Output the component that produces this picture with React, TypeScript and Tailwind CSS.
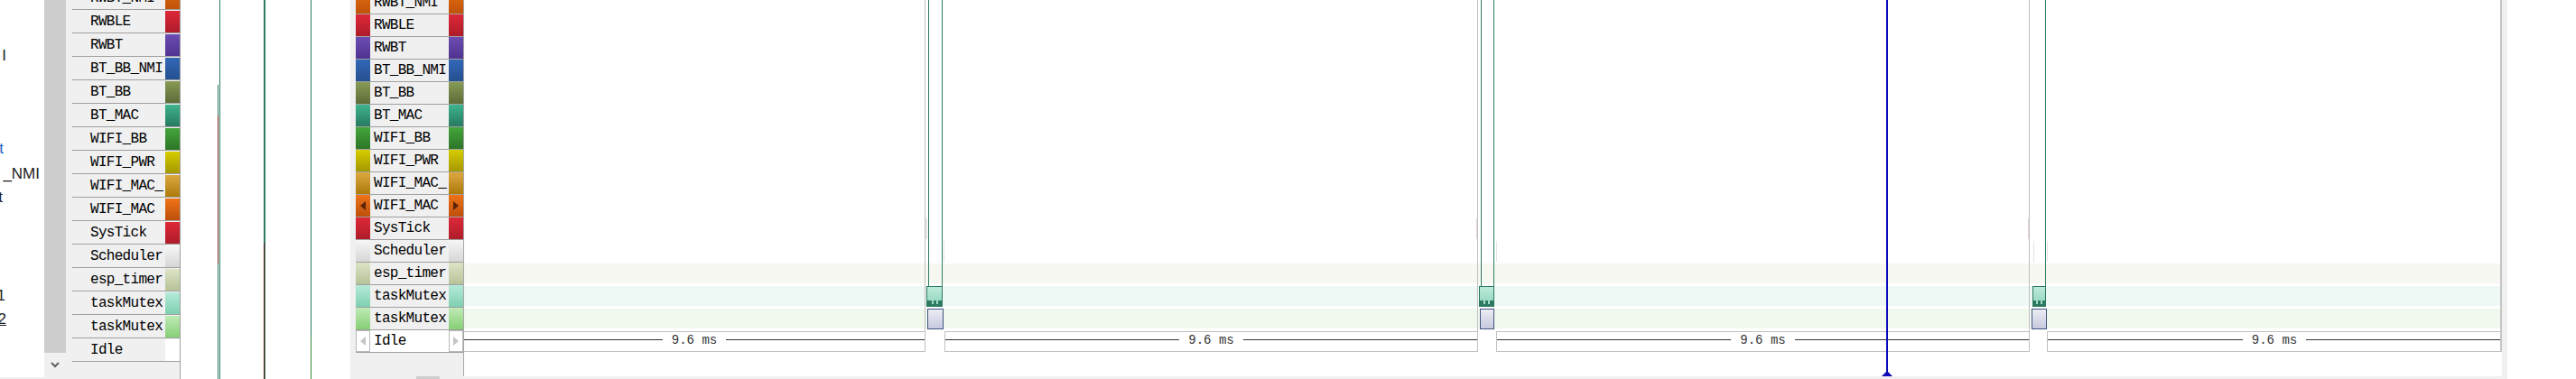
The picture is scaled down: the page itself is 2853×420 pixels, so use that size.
import React from 'react';

interface Track {
  name: string;
  swatch: string;
  mark?: 'dark' | 'idle';
}

const tracks: Track[] = [
  { name: 'RWBT_NMI', swatch: 'bg-linear-to-b from-[#e36c12] to-[#bf5208]' },
  { name: 'RWBLE', swatch: 'bg-linear-to-b from-[#de2838] to-[#ae1c2a]' },
  { name: 'RWBT', swatch: 'bg-linear-to-b from-[#6c4cb4] to-[#4f3390]' },
  { name: 'BT_BB_NMI', swatch: 'bg-linear-to-b from-[#3268b8] to-[#254f90]' },
  { name: 'BT_BB', swatch: 'bg-linear-to-b from-[#879a55] to-[#5e6c38]' },
  { name: 'BT_MAC', swatch: 'bg-linear-to-b from-[#3db48e] to-[#287a62]' },
  { name: 'WIFI_BB', swatch: 'bg-linear-to-b from-[#44a63a] to-[#2c7628]' },
  { name: 'WIFI_PWR', swatch: 'bg-linear-to-b from-[#d6cc00] to-[#a49800]' },
  { name: 'WIFI_MAC_', swatch: 'bg-linear-to-b from-[#dca83e] to-[#ad7a06]' },
  { name: 'WIFI_MAC', swatch: 'bg-linear-to-b from-[#ef7318] to-[#bd4f0a]', mark: 'dark' },
  { name: 'SysTick', swatch: 'bg-linear-to-b from-[#de2838] to-[#ae1c2a]' },
  { name: 'Scheduler', swatch: 'bg-linear-to-b from-[#f6f6f6] to-[#d6d6d6]' },
  { name: 'esp_timer', swatch: 'bg-linear-to-b from-[#dce4c6] to-[#b6c298]' },
  { name: 'taskMutex', swatch: 'bg-linear-to-b from-[#b4ead9] to-[#7ed0b0]' },
  { name: 'taskMutex', swatch: 'bg-linear-to-b from-[#bfeab6] to-[#86cf74]' },
  { name: 'Idle', swatch: 'bg-white', mark: 'idle' },
];

const Arrow = ({ dir, color }: { dir: 'left' | 'right'; color: string }) => (
  <svg width="6" height="10" viewBox="0 0 6 10">
    <path d={dir === 'left' ? 'M6 0 L0 5 L6 10 Z' : 'M0 0 L6 5 L0 10 Z'} fill={color} />
  </svg>
);

// clipped text of the tree view on the far left
const TreePane = () => (
  <div className="h-[418px] w-[49px] shrink-0 overflow-hidden bg-white font-['Liberation_Sans',sans-serif] text-[17px] leading-[20px] text-[#1c1c1c]">
    <div className="mt-[52px] flex h-[20px] w-[7px] justify-end">
      <span className="whitespace-nowrap">Core I</span>
    </div>
    <div className="mt-[83px] flex h-[20px] w-[4px] justify-end text-[#1764c4]">
      <span className="whitespace-nowrap">Wait</span>
    </div>
    <div className="mt-[8px] flex h-[20px] w-[44px] justify-end">
      <span className="whitespace-nowrap">BT_BB _NMI</span>
    </div>
    <div className="mt-[6px] flex h-[20px] w-[3px] justify-end">
      <span className="whitespace-nowrap">Event</span>
    </div>
    <div className="mt-[89px] flex h-[20px] w-[6px] justify-end">
      <span className="whitespace-nowrap">Task1</span>
    </div>
    <div className="mt-[6px] flex h-[20px] w-[7px] justify-end">
      <span className="whitespace-nowrap underline">Task2</span>
    </div>
  </div>
);

const VScroll = () => (
  <div className="flex h-[420px] w-[24px] shrink-0 flex-col">
    <div className="h-[391px] bg-[#cdcdcd]" />
    <div className="flex h-[27px] items-center justify-center">
      <svg width="10" height="7" viewBox="0 0 10 7">
        <polyline points="1,1 5,5 9,1" fill="none" stroke="#606060" strokeWidth="2" />
      </svg>
    </div>
  </div>
);

const LegendNarrow = () => (
  <div className="h-[420px] w-[120px] shrink-0 overflow-hidden border-r border-[#a0a0a0]">
    <div className="-mt-[16px]">
      {tracks.map((t, i) => (
        <div key={i} className="flex h-[26px] border-t border-[#a0a0a0] pt-px">
          <div className="flex h-[24px] flex-1 items-center overflow-hidden whitespace-nowrap pl-[20px] text-[16px] tracking-[-0.7px]">
            {t.name}
          </div>
          <div className={`h-[24px] w-[16px] ${t.swatch}`} />
        </div>
      ))}
      <div className="border-t border-[#a0a0a0]" />
    </div>
  </div>
);

// activity traces in the narrow white lane
const Lane = () => (
  <div className="relative h-[420px] w-[188px] shrink-0 bg-white">
    <div className="absolute left-[41px] top-[94px] h-[34px] w-px bg-[#2d7b66]" />
    <div className="absolute left-[41px] top-[128px] h-[164px] w-px bg-[#7a2418]" />
    <div className="absolute left-[41px] top-[292px] h-[128px] w-px bg-[#2d7b66]" />
    <div className="absolute left-[43px] top-0 h-full w-px bg-[#2d7b66]" />
    <div className="absolute left-[92px] top-0 h-full w-[2px] bg-[#2d7b66]" />
    <div className="absolute left-[92px] top-[269px] h-[151px] w-px bg-[#6e2318]" />
    <div className="absolute left-[144px] top-0 h-[373px] w-px bg-[#2d7b66]" />
    <div className="absolute left-[144px] top-[373px] h-[47px] w-px bg-[#3f8a3a]" />
  </div>
);

const LegendWide = () => (
  <div className="flex h-[420px] w-[119px] shrink-0 flex-col">
    <div className="h-[417px] overflow-hidden">
      <div className="-mt-[10px]">
        {tracks.map((t, i) => (
          <div key={i} className="flex h-[25px] border-t border-[#a0a0a0]">
            <div
              className={`flex h-[24px] w-[16px] items-center justify-center ${t.swatch} ${
                t.mark === 'idle' ? 'border border-[#b8b8b8]' : ''
              }`}
            >
              {t.mark === 'dark' && <Arrow dir="left" color="#5a2406" />}
              {t.mark === 'idle' && <Arrow dir="left" color="#c4c4c4" />}
            </div>
            <div
              className={`flex h-[24px] w-[87px] items-center overflow-hidden whitespace-nowrap pl-[4px] text-[16px] tracking-[-0.7px] ${
                t.mark === 'idle' ? 'bg-white' : ''
              }`}
            >
              {t.name}
            </div>
            <div
              className={`flex h-[24px] w-[16px] items-center justify-center ${t.swatch} ${
                t.mark === 'idle' ? 'border border-[#b8b8b8]' : ''
              }`}
            >
              {t.mark === 'dark' && <Arrow dir="right" color="#5a2406" />}
              {t.mark === 'idle' && <Arrow dir="right" color="#c4c4c4" />}
            </div>
          </div>
        ))}
        <div className="border-t border-[#a0a0a0]" />
      </div>
    </div>
    <div className="h-[3px]">
      <div className="ml-[67px] h-[3px] w-[26px] bg-[#cdcdcd]" />
    </div>
  </div>
);

const IdleSpan = ({ cls }: { cls: string }) => (
  <div className={`relative h-[23px] shrink-0 border border-[#c0c0c0] bg-white ${cls}`}>
    <div className="flex h-[17px] items-center">
      <div className="h-px flex-1 bg-[#333]" />
      <span className="px-[10px] text-[14px] leading-none text-[#333]">9.6 ms</span>
      <div className="h-px flex-1 bg-[#333]" />
    </div>
  </div>
);

const MutexBox = ({ cls }: { cls: string }) => (
  <div
    className={`absolute top-[317px] flex h-[23px] flex-col justify-end border border-[#2d7a62] bg-linear-to-b from-[#bdeada] to-[#8fd4ba] ${cls}`}
  >
    <div className="flex h-[6px] justify-center gap-[3px] bg-[#2d7a62]">
      <div className="h-[4px] w-[2px] bg-[#a3dcc6]" />
      <div className="h-[4px] w-[2px] bg-[#a3dcc6]" />
    </div>
  </div>
);

const IdleSwitch = ({ cls }: { cls: string }) => (
  <div
    className={`absolute top-[342px] h-[23px] border border-[#3f5680] bg-linear-to-b from-[#ececf3] to-[#c7cadf] ${cls}`}
  />
);

const Timeline = () => (
  <div className="relative h-[417px] w-[2258px] shrink-0 bg-white">
    {/* row bands */}
    <div className="flex flex-col pt-[290px]">
      <div className="h-[25px] pt-[2px]">
        <div className="h-[22px] bg-[#f7f8f2]" />
      </div>
      <div className="h-[25px] pt-[2px]">
        <div className="h-[22px] bg-[#eef8f5]" />
      </div>
      <div className="h-[25px] pt-[2px]">
        <div className="h-[22px] bg-[#f1f8ee]" />
      </div>
      {/* idle intervals */}
      <div className="flex h-[25px] pt-[2px]">
        <IdleSpan cls="w-[512px]" />
        <IdleSpan cls="ml-[21px] w-[591px]" />
        <IdleSpan cls="ml-[20px] w-[591px]" />
        <IdleSpan cls="ml-[19px] w-[504px]" />
      </div>
    </div>

    {/* frame */}
    <div className="absolute left-0 top-0 h-[417px] w-px bg-[#a8a8a8]" />
    <div className="absolute left-[2256px] top-0 h-[390px] w-[2px] bg-[#c4c4c4]" />
    <div className="absolute left-[511px] top-0 h-[367px] w-px bg-[#c0c0c0]" />
    <div className="absolute left-[1123px] top-0 h-[367px] w-px bg-[#c0c0c0]" />
    <div className="absolute left-[1734px] top-0 h-[367px] w-px bg-[#c0c0c0]" />

    {/* faint ticks */}
    <div className="absolute left-[512px] top-[242px] h-[23px] w-[2px] bg-[#e6e6e6]" />
    <div className="absolute left-[532px] top-[267px] h-[23px] w-px bg-[#e4e4e4]" />
    <div className="absolute left-[1122px] top-[242px] h-[23px] w-px bg-[#e6d6d6]" />
    <div className="absolute left-[1144px] top-[267px] h-[23px] w-px bg-[#e4e4e4]" />
    <div className="absolute left-[1733px] top-[242px] h-[23px] w-px bg-[#e6d6d6]" />
    <div className="absolute left-[1739px] top-[267px] h-[23px] w-px bg-[#e4e4e4]" />
    <div className="absolute left-[1754px] top-[267px] h-[23px] w-px bg-[#e4e4e4]" />

    {/* task switches */}
    <div className="absolute left-[515px] top-0 h-[317px] w-px bg-[#2d7b66]" />
    <div className="absolute left-[530px] top-0 h-[317px] w-px bg-[#2d7b66]" />
    <MutexBox cls="left-[513px] w-[18px]" />
    <IdleSwitch cls="left-[514px] w-[18px]" />

    <div className="absolute left-[1127px] top-0 h-[317px] w-px bg-[#2d7b66]" />
    <div className="absolute left-[1141px] top-0 h-[317px] w-px bg-[#2d7b66]" />
    <MutexBox cls="left-[1125px] w-[17px]" />
    <IdleSwitch cls="left-[1126px] w-[16px]" />

    <div className="absolute left-[1752px] top-0 h-[317px] w-px bg-[#2d7b66]" />
    <MutexBox cls="left-[1738px] w-[15px]" />
    <IdleSwitch cls="left-[1737px] w-[17px]" />

    {/* cursor */}
    <div className="absolute left-[1576px] top-0 h-[417px] w-[2px] bg-[#0a0ab8]" />
    <svg className="absolute left-[1571px] top-[411px]" width="12" height="6" viewBox="0 0 12 6">
      <path d="M0 6 L6 0 L12 6 Z" fill="#0a0ab8" />
    </svg>
  </div>
);

export default function App() {
  return (
    <div className="flex h-[420px] w-[2853px] overflow-hidden bg-[#f0f0f0] font-['Liberation_Mono',monospace] text-black">
      <TreePane />
      <VScroll />
      <div className="w-[7px] shrink-0" />
      <LegendNarrow />
      <Lane />
      <div className="w-[6px] shrink-0" />
      <LegendWide />
      <Timeline />
      <div className="w-[6px] shrink-0" />
      <div className="h-[420px] flex-1 bg-white" />
    </div>
  );
}
